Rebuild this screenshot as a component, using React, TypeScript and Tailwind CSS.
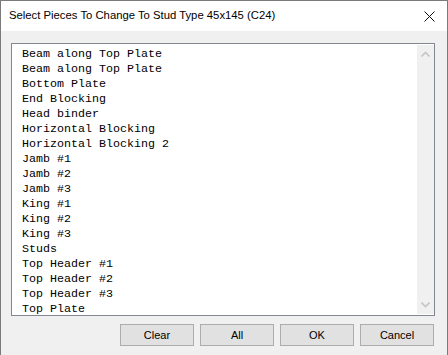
import React from "react"

const pieces = [
  "Beam along Top Plate",
  "Beam along Top Plate",
  "Bottom Plate",
  "End Blocking",
  "Head binder",
  "Horizontal Blocking",
  "Horizontal Blocking 2",
  "Jamb #1",
  "Jamb #2",
  "Jamb #3",
  "King #1",
  "King #2",
  "King #3",
  "Studs",
  "Top Header #1",
  "Top Header #2",
  "Top Header #3",
  "Top Plate",
]

const buttons = ["Clear", "All", "OK", "Cancel"]

function Chevron({ up }: { up?: boolean }) {
  return (
    <svg width="9" height="6" viewBox="0 0 9 6" className="block">
      <path
        d={up ? "M0.5 5.5 L4.5 1.5 L8.5 5.5" : "M0.5 0.5 L4.5 4.5 L8.5 0.5"}
        fill="none"
        stroke="#c6c6c6"
        strokeWidth="1.6"
      />
    </svg>
  )
}

export default function App() {
  return (
    <div
      className="w-[448px] h-[355px] flex flex-col bg-[#f0f0f0] border-l border-t border-r border-[#7a7a7a] overflow-hidden"
      style={{ fontFamily: '"Liberation Sans", Arial, sans-serif' }}
    >
      {/* title bar */}
      <div className="h-[30px] shrink-0 bg-white flex items-center justify-between pl-[8px] pr-[12px]">
        <span className="text-[11.3px] text-black leading-none">
          Select Pieces To Change To Stud Type 45x145 (C24)
        </span>
        <svg width="11" height="11" viewBox="0 0 11 11">
          <path d="M0.5 0.5 L10.5 10.5 M10.5 0.5 L0.5 10.5" stroke="#111" strokeWidth="1" />
        </svg>
      </div>

      {/* list box */}
      <div className="ml-[10px] mr-[12px] mt-[12px] h-[273px] flex border border-[#828790] bg-white">
        <div
          className="flex-1 pt-[3px] pl-[10px] text-[11.67px] text-black"
          style={{ fontFamily: '"Liberation Mono", "Courier New", monospace' }}
        >
          {pieces.map((p, i) => (
            <div key={i} className="h-[15px] leading-[15px] whitespace-pre">
              {p}
            </div>
          ))}
        </div>
        <div className="w-[17px] my-[1px] bg-[#f0f0f0] flex flex-col items-center justify-between py-[6px]">
          <Chevron up />
          <Chevron />
        </div>
      </div>

      {/* buttons */}
      <div className="flex justify-end gap-[6px] mr-[13px] mt-[8px]">
        {buttons.map(b => (
          <button
            key={b}
            type="button"
            className="w-[74px] h-[22px] bg-[#e1e1e1] border border-[#adadad] text-[11px] text-black leading-none"
          >
            {b}
          </button>
        ))}
      </div>
    </div>
  )
}
